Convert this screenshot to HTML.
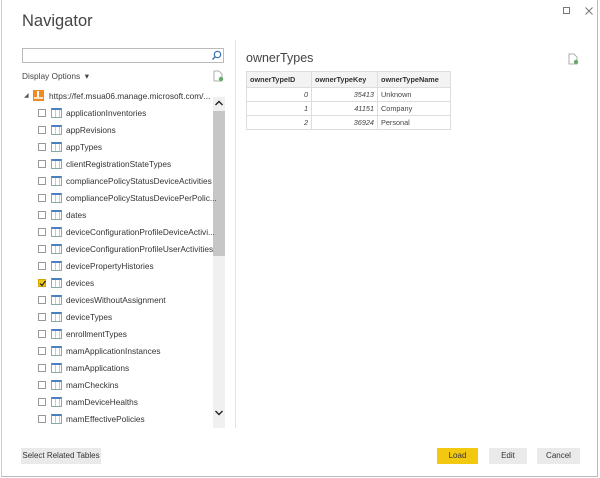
<!DOCTYPE html>
<html><head><meta charset="utf-8"><style>
*{margin:0;padding:0;box-sizing:border-box}
body{width:600px;height:478px;background:#fff;font-family:"Liberation Sans",sans-serif;position:relative;overflow:hidden;color:#333}
.win{position:absolute;left:1px;top:0;width:597px;height:477px;border-left:1px solid #ccc;border-right:1px solid #bbb;border-bottom:1px solid #bbb}
.a{position:absolute}
.item{position:absolute;left:38px;height:17px;font-size:8.3px;line-height:17px;white-space:nowrap;color:#333}
.cb{position:absolute;left:0;top:4px;width:8px;height:8px;border:1px solid #999;background:#fff}
.ti{position:absolute;left:13px;top:3px;width:11px;height:10px;border:1px solid #8aa;border-top:2px solid #4a7fc0;background:repeating-linear-gradient(90deg,#fff 0 3px,#bcd 3px 4px)}
.lbl{position:absolute;left:28px;top:0}
table{border-collapse:collapse;font-size:7.3px;position:absolute;left:246px;top:71px}
td{border:1px solid #ddd;height:14px;padding:0 3px;color:#444}
th{border:1px solid #ddd;background:#f3f3f3;height:16px;text-align:left;padding:0 3px;font-weight:bold;color:#333}
.btn{position:absolute;top:448px;height:16px;background:#eaeaea;font-size:8px;line-height:16px;text-align:center;color:#333}
</style></head><body>
<div class="win"></div>
<div class="a" style="left:22px;top:12px;font-size:16.5px;color:#444">Navigator</div>
<div class="a" style="left:563px;top:7px;width:7px;height:7px;border:1px solid #777"></div>
<svg class="a" style="left:585px;top:7px" width="8" height="8"><path d="M0.5 0.5L7.5 7.5M7.5 0.5L0.5 7.5" stroke="#777" stroke-width="1"/></svg>
<div class="a" style="left:22px;top:48px;width:202px;height:15px;border:1px solid #bbb"></div>
<svg class="a" style="left:211px;top:50px" width="11" height="11"><circle cx="6.5" cy="4.5" r="3.2" fill="none" stroke="#3a6fb0" stroke-width="1.2"/><line x1="4.2" y1="6.8" x2="1.5" y2="9.5" stroke="#3a6fb0" stroke-width="1.4"/></svg>
<div class="a" style="left:22px;top:71px;font-size:8.3px;color:#444">Display Options &nbsp;▾</div>
<svg class="a" style="left:213px;top:70px" width="11" height="12"><path d="M1 1h5l3 3v7H1z" fill="#fff" stroke="#999" stroke-width=".8"/><circle cx="8" cy="9" r="2.2" fill="#6a6" /></svg>
<svg class="a" style="left:568px;top:53px" width="11" height="12"><path d="M1 1h5l3 3v7H1z" fill="#fff" stroke="#999" stroke-width=".8"/><circle cx="8" cy="9" r="2.2" fill="#6a6"/></svg>
<div class="a" style="left:24px;top:92px;font-size:6px;color:#555">◢</div>
<div class="a" style="left:33px;top:90px;width:11px;height:11px;background:#f08a24"><div class="a" style="left:4px;top:1px;width:2px;height:7px;background:#fff"></div><div class="a" style="left:1px;top:7px;width:9px;height:2px;background:#fde2c0"></div></div>
<div class="a" style="left:49px;top:91px;font-size:8.3px;color:#333">https://fef.msua06.manage.microsoft.com/...</div>
<div class="a" style="left:213px;top:97px;width:12px;height:331px;background:#f0f0f0"></div>
<div class="a" style="left:213px;top:111px;width:12px;height:145px;background:#c6c6c6"></div>
<svg class="a" style="left:214px;top:99px" width="10" height="8"><path d="M1.5 6L5 2.5 8.5 6" fill="none" stroke="#222" stroke-width="1.4"/></svg>
<svg class="a" style="left:214px;top:409px" width="10" height="8"><path d="M1.5 2L5 5.5 8.5 2" fill="none" stroke="#222" stroke-width="1.4"/></svg>
<div class="a" style="left:235px;top:40px;width:1px;height:388px;background:#e4e4e4"></div>

<div class="item" style="top:105px"><div class="cb"></div><div class="ti"></div><span class="lbl">applicationInventories</span></div>
<div class="item" style="top:122px"><div class="cb"></div><div class="ti"></div><span class="lbl">appRevisions</span></div>
<div class="item" style="top:139px"><div class="cb"></div><div class="ti"></div><span class="lbl">appTypes</span></div>
<div class="item" style="top:156px"><div class="cb"></div><div class="ti"></div><span class="lbl">clientRegistrationStateTypes</span></div>
<div class="item" style="top:173px"><div class="cb"></div><div class="ti"></div><span class="lbl">compliancePolicyStatusDeviceActivities</span></div>
<div class="item" style="top:190px"><div class="cb"></div><div class="ti"></div><span class="lbl">compliancePolicyStatusDevicePerPolic...</span></div>
<div class="item" style="top:207px"><div class="cb"></div><div class="ti"></div><span class="lbl">dates</span></div>
<div class="item" style="top:224px"><div class="cb"></div><div class="ti"></div><span class="lbl">deviceConfigurationProfileDeviceActivi...</span></div>
<div class="item" style="top:241px"><div class="cb"></div><div class="ti"></div><span class="lbl">deviceConfigurationProfileUserActivities</span></div>
<div class="item" style="top:258px"><div class="cb"></div><div class="ti"></div><span class="lbl">devicePropertyHistories</span></div>
<div class="item" style="top:275px"><div class="cb" style="background:#f2c811;border-color:#d4a800"><svg class="a" style="left:0;top:0" width="7" height="7"><path d="M1 3.5L3 5.5 6.5 1" fill="none" stroke="#222" stroke-width="1.2"/></svg></div><div class="ti"></div><span class="lbl">devices</span></div>
<div class="item" style="top:292px"><div class="cb"></div><div class="ti"></div><span class="lbl">devicesWithoutAssignment</span></div>
<div class="item" style="top:309px"><div class="cb"></div><div class="ti"></div><span class="lbl">deviceTypes</span></div>
<div class="item" style="top:326px"><div class="cb"></div><div class="ti"></div><span class="lbl">enrollmentTypes</span></div>
<div class="item" style="top:343px"><div class="cb"></div><div class="ti"></div><span class="lbl">mamApplicationInstances</span></div>
<div class="item" style="top:360px"><div class="cb"></div><div class="ti"></div><span class="lbl">mamApplications</span></div>
<div class="item" style="top:377px"><div class="cb"></div><div class="ti"></div><span class="lbl">mamCheckins</span></div>
<div class="item" style="top:394px"><div class="cb"></div><div class="ti"></div><span class="lbl">mamDeviceHealths</span></div>
<div class="item" style="top:411px"><div class="cb"></div><div class="ti"></div><span class="lbl">mamEffectivePolicies</span></div>

<div class="a" style="left:246px;top:51px;font-size:12.5px;color:#444">ownerTypes</div>
<table>
<tr><th style="width:65px">ownerTypeID</th><th style="width:66px">ownerTypeKey</th><th style="width:73px">ownerTypeName</th></tr>
<tr><td style="text-align:right;font-style:italic">0</td><td style="text-align:right;font-style:italic">35413</td><td>Unknown</td></tr>
<tr><td style="text-align:right;font-style:italic">1</td><td style="text-align:right;font-style:italic">41151</td><td>Company</td></tr>
<tr><td style="text-align:right;font-style:italic">2</td><td style="text-align:right;font-style:italic">36924</td><td>Personal</td></tr>
</table>

<div class="btn" style="left:21px;width:80px">Select Related Tables</div>
<div class="btn" style="left:437px;width:41px;background:#f2c811">Load</div>
<div class="btn" style="left:489px;width:38px">Edit</div>
<div class="btn" style="left:537px;width:43px">Cancel</div>
</body></html>
